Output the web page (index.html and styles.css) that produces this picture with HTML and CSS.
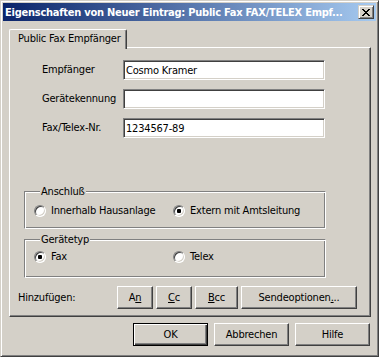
FILE: index.html
```html
<!DOCTYPE html>
<html lang="de">
<head>
<meta charset="utf-8">
<title>Eigenschaften von Neuer Eintrag</title>
<link rel="stylesheet" href="styles.css">
</head>
<body>
<div class="window">
  <div class="titlebar">
    <span class="title">Eigenschaften von Neuer Eintrag: Public Fax FAX/TELEX Empf...</span>
    <button class="close" type="button" aria-label="Schließen">
      <svg width="8" height="7" viewBox="0 0 8 7" shape-rendering="crispEdges"><path d="M0 0h2v1H0zM6 0h2v1H6zM1 1h2v1H1zM5 1h2v1H5zM2 2h4v1H2zM3 3h2v1H3zM2 4h4v1H2zM1 5h2v1H1zM5 5h2v1H5zM0 6h2v1H0zM6 6h2v1H6z" fill="#000"/></svg>
    </button>
  </div>
  <div class="body">
    <div class="tabs">
      <div class="tab">Public Fax Empfänger</div>
    </div>
    <div class="panel">
      <div class="fields">
        <label class="label">Empfänger</label>
        <input class="edit" type="text" value="Cosmo Kramer">
        <label class="label">Gerätekennung</label>
        <input class="edit" type="text" value="">
        <label class="label">Fax/Telex-Nr.</label>
        <input class="edit" type="text" value="1234567-89">
      </div>
      <fieldset class="group group-1">
        <legend>Anschluß</legend>
        <div class="radios">
          <span class="option"><span class="radio"></span>Innerhalb Hausanlage</span>
          <span class="option"><span class="radio checked"></span>Extern mit Amtsleitung</span>
        </div>
      </fieldset>
      <fieldset class="group group-2">
        <legend>Gerätetyp</legend>
        <div class="radios">
          <span class="option"><span class="radio checked"></span>Fax</span>
          <span class="option"><span class="radio"></span>Telex</span>
        </div>
      </fieldset>
      <div class="addrow">
        <span class="addlabel">Hinzufügen:</span>
        <div class="addbtns">
          <button class="btn btn-an" type="button">A<u>n</u></button>
          <button class="btn btn-cc" type="button"><u>C</u>c</button>
          <button class="btn btn-bcc" type="button"><u>B</u>cc</button>
          <button class="btn btn-send" type="button">Sendeoptionen<u>.</u>..</button>
        </div>
      </div>
    </div>
    <div class="actions">
      <button class="btn btn-main btn-default" type="button">OK</button>
      <button class="btn btn-main" type="button">Abbrechen</button>
      <button class="btn btn-main" type="button">Hilfe</button>
    </div>
  </div>
</div>
</body>
</html>
```
FILE: styles.css
```css
html, body {
  margin: 0;
  padding: 0;
}
body {
  width: 379px;
  height: 357px;
  font-family: "DejaVu Sans Condensed", "Liberation Sans", sans-serif;
  font-size: 11px;
  letter-spacing: -0.2px;
  color: #000;
  background: #D4D0C8;
}
.window {
  box-sizing: border-box;
  width: 379px;
  height: 357px;
  border: 1px solid;
  border-color: #D4D0C8 #404040 #404040 #D4D0C8;
  box-shadow: inset 1px 1px #fff, inset -1px -1px #808080;
  padding: 2px;
  background: #D4D0C8;
  display: flex;
  flex-direction: column;
}
.titlebar {
  height: 18px;
  flex: none;
  display: flex;
  align-items: center;
  justify-content: space-between;
  background: linear-gradient(to right, #0A246A, #A6CAF0);
  padding: 0 2px 0 2px;
}
.title {
  color: #fff;
  font-weight: bold;
  font-size: 11px;
  letter-spacing: -0.25px;
  white-space: nowrap;
  line-height: 13px;
}
.close {
  box-sizing: border-box;
  width: 16px;
  height: 14px;
  padding: 0;
  margin: 0;
  border: 1px solid;
  border-color: #D4D0C8 #404040 #404040 #D4D0C8;
  box-shadow: inset 1px 1px #fff, inset -1px -1px #808080;
  background: #D4D0C8;
  display: flex;
  align-items: center;
  justify-content: center;
}
.close svg {
  display: block;
}
.body {
  flex: 1;
  display: flex;
  flex-direction: column;
  padding: 8px 5px 0 6px;
}
.tabs {
  display: flex;
  height: 19px;
  margin-bottom: -1px;
  position: relative;
  z-index: 1;
}
.tab {
  box-sizing: border-box;
  width: 118px;
  height: 20px;
  border-top: 1px solid #fff;
  border-left: 1px solid #fff;
  border-right: 1px solid #404040;
  border-radius: 2px 2px 0 0;
  box-shadow: inset -1px 0 #808080;
  background: #D4D0C8;
  padding-left: 8px;
  line-height: 17px;
  white-space: nowrap;
}
.panel {
  box-sizing: border-box;
  width: 362px;
  height: 270px;
  border: 1px solid;
  border-color: #fff #404040 #404040 #fff;
  box-shadow: inset -1px -1px #808080;
  display: flex;
  flex-direction: column;
}
.fields {
  display: grid;
  grid-template-columns: 81px 202px;
  grid-auto-rows: 20px;
  row-gap: 9px;
  align-items: center;
  margin: 12px 0 0 32px;
}
.label {
  line-height: 13px;
  margin-top: -2px;
}
.edit {
  box-sizing: border-box;
  width: 202px;
  height: 20px;
  margin: 0;
  padding: 0 2px;
  border: 1px solid;
  border-color: #808080 #fff #fff #808080;
  box-shadow: inset 1px 1px #404040, inset -1px -1px #D4D0C8;
  background: #fff;
  font: inherit;
  letter-spacing: inherit;
  color: #000;
  outline: none;
}
.group {
  box-sizing: border-box;
  width: 302px;
  margin: 0 0 0 14px;
  padding: 0;
  min-inline-size: 0;
  border: 1px solid;
  border-color: #808080 #fff #fff #808080;
  box-shadow: inset 1px 1px #fff, inset -1px -1px #808080;
}
.group legend {
  padding: 0 1px;
  margin-left: 6px;
  line-height: 13px;
  background: #D4D0C8;
  position: relative;
}
.group-1 {
  margin-top: 47px;
  padding: 6px 0 11px 9px;
}
.group-2 {
  margin-top: 4px;
  padding: 4px 0 14px 9px;
}
.radios {
  display: grid;
  grid-template-columns: 139px auto;
  line-height: 13px;
}
.option {
  display: flex;
  align-items: center;
  white-space: nowrap;
}
.radio {
  box-sizing: border-box;
  width: 12px;
  height: 12px;
  flex: none;
  border-radius: 50%;
  border: 1px solid;
  border-color: #808080 #fff #fff #808080;
  box-shadow: inset 1px 1px #404040, inset -1px -1px #D4D0C8;
  background: #fff;
  margin-right: 5px;
  display: flex;
  align-items: center;
  justify-content: center;
}
.radio.checked::after {
  content: "";
  width: 4px;
  height: 4px;
  border-radius: 1px;
  background: #000;
}
.addrow {
  display: flex;
  align-items: center;
  margin: 8px 0 0 8px;
  height: 23px;
}
.addlabel {
  width: 99px;
  line-height: 13px;
}
.addbtns {
  display: flex;
  gap: 3px;
}
.btn {
  box-sizing: border-box;
  height: 23px;
  margin: 0;
  padding: 0;
  border: 1px solid;
  border-color: #fff #404040 #404040 #fff;
  box-shadow: inset -1px -1px #808080;
  background: #D4D0C8;
  font: inherit;
  letter-spacing: inherit;
  color: #000;
  line-height: 13px;
}
.btn u {
  text-underline-offset: 1px;
}
.btn-an, .btn-cc {
  width: 36px;
}
.btn-bcc {
  width: 43px;
}
.btn-send {
  width: 116px;
}
.actions {
  display: flex;
  justify-content: flex-end;
  gap: 6px;
  margin-top: 6px;
  padding-right: 1px;
}
.btn-main {
  width: 75px;
}
.btn-default {
  border: 1px solid #000;
  box-shadow: inset 1px 1px #fff, inset -1px -1px #404040, inset -2px -2px #808080;
}
```
